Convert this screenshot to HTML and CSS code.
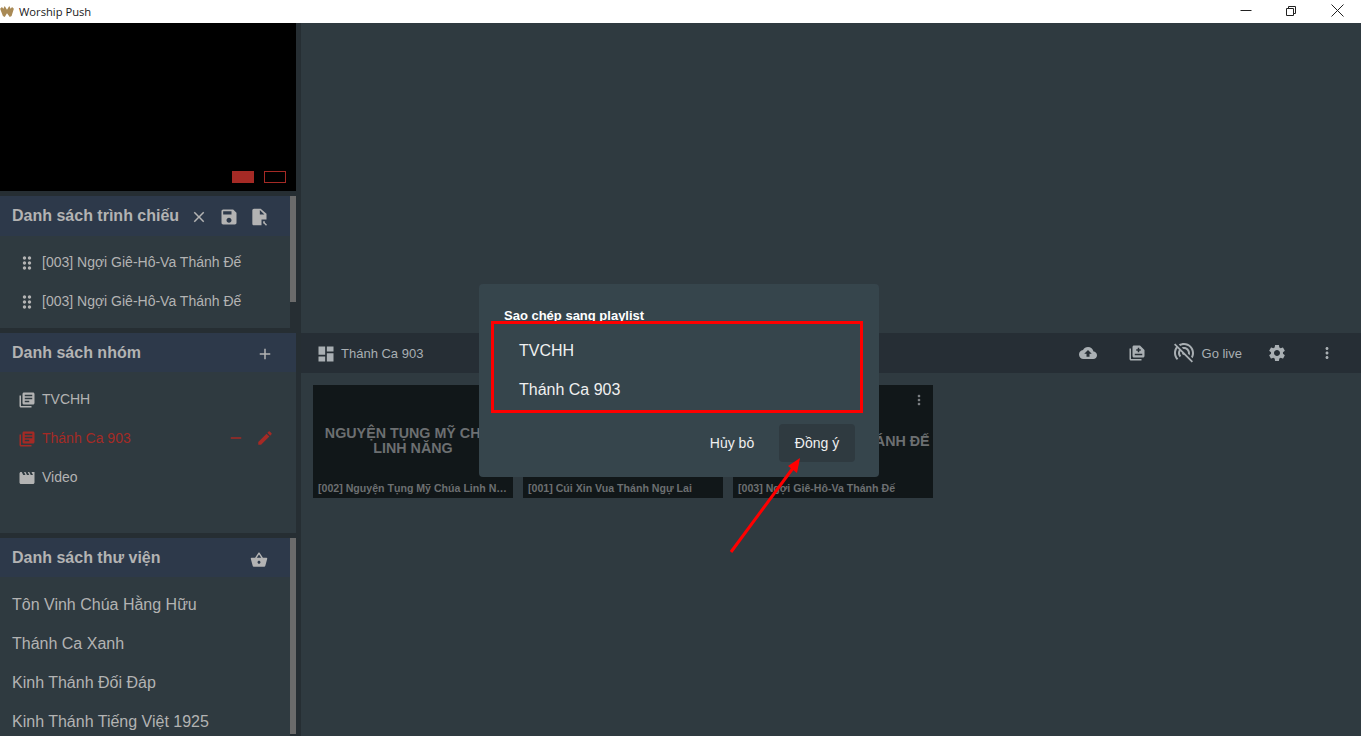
FILE: index.html
```html
<!DOCTYPE html>
<html lang="en">
<head>
    <meta charset="UTF-8">
    <meta name="viewport" content="width=device-width, initial-scale=1.0">
    <title>Worship Push</title>
    <link rel="stylesheet" href="styles.css">
</head>
<body>
    <svg class="sprite" aria-hidden="true">
        <symbol id="i-close" viewBox="0 0 24 24"><path d="M19 6.41L17.59 5 12 10.59 6.41 5 5 6.41 10.59 12 5 17.59 6.41 19 12 13.41 17.59 19 19 17.59 13.41 12z"/></symbol>
        <symbol id="i-save" viewBox="0 0 24 24"><path d="M17 3H5c-1.11 0-2 .9-2 2v14c0 1.1.89 2 2 2h14c1.1 0 2-.9 2-2V7l-4-4zm-5 16c-1.66 0-3-1.34-3-3s1.34-3 3-3 3 1.34 3 3-1.34 3-3 3zm3-10H5V5h10v4z"/></symbol>
        <symbol id="i-file" viewBox="0 0 24 24"><path d="M14 2H6c-1.1 0-2 .9-2 2v16c0 1.1.9 2 2 2h9v-7h6V8l-7-6zm-1 7V3.5L18.5 9H13z"/><path d="M17 17h2v1.6l2.6 2.6-1.2 1.2-2.6-2.6H17z"/></symbol>
        <symbol id="i-drag" viewBox="0 0 24 24"><path d="M11 18c0 1.1-.9 2-2 2s-2-.9-2-2 .9-2 2-2 2 .9 2 2zm-2-8c-1.1 0-2 .9-2 2s.9 2 2 2 2-.9 2-2-.9-2-2-2zm0-6c-1.1 0-2 .9-2 2s.9 2 2 2 2-.9 2-2-.9-2-2-2zm6 4c1.1 0 2-.9 2-2s-.9-2-2-2-2 .9-2 2 .9 2 2 2zm0 2c-1.1 0-2 .9-2 2s.9 2 2 2 2-.9 2-2-.9-2-2-2zm0 6c-1.1 0-2 .9-2 2s.9 2 2 2 2-.9 2-2-.9-2-2-2z"/></symbol>
        <symbol id="i-add" viewBox="0 0 24 24"><path d="M19 13h-6v6h-2v-6H5v-2h6V5h2v6h6v2z"/></symbol>
        <symbol id="i-books" viewBox="0 0 24 24"><path d="M4 6H2v14c0 1.1.9 2 2 2h14v-2H4V6zm16-4H8c-1.1 0-2 .9-2 2v12c0 1.1.9 2 2 2h12c1.1 0 2-.9 2-2V4c0-1.1-.9-2-2-2zm-1 9H9V9h10v2zm-4 4H9v-2h6v2zm4-8H9V5h10v2z"/></symbol>
        <symbol id="i-movie" viewBox="0 0 24 24"><path d="M18 4l2 4h-3l-2-4h-2l2 4h-3l-2-4H8l2 4H7L5 4H4c-1.1 0-1.99.9-1.99 2L2 18c0 1.1.9 2 2 2h16c1.1 0 2-.9 2-2V4h-4z"/></symbol>
        <symbol id="i-remove" viewBox="0 0 24 24"><path d="M19 13H5v-2h14v2z"/></symbol>
        <symbol id="i-edit" viewBox="0 0 24 24"><path d="M3 17.25V21h3.75L17.81 9.94l-3.75-3.75L3 17.25zM20.71 7.04c.39-.39.39-1.02 0-1.41l-2.34-2.34c-.39-.39-1.02-.39-1.41 0l-1.83 1.83 3.75 3.75 1.83-1.83z"/></symbol>
        <symbol id="i-basket" viewBox="0 0 24 24"><path d="M17.21 9l-4.38-6.56c-.19-.28-.51-.42-.83-.42-.32 0-.64.14-.83.43L6.79 9H2c-.55 0-1 .45-1 1 0 .09.01.18.04.27l2.54 9.27c.23.84 1 1.46 1.92 1.46h13c.92 0 1.69-.62 1.93-1.46l2.54-9.27L23 10c0-.55-.45-1-1-1h-4.79zM9 9l3-4.4L15 9H9zm3 8c-1.1 0-2-.9-2-2s.9-2 2-2 2 .9 2 2-.9 2-2 2z"/></symbol>
        <symbol id="i-dashboard" viewBox="0 0 24 24"><path d="M3 13h8V3H3v10zm0 8h8v-6H3v6zm10 0h8V11h-8v10zm0-18v6h8V3h-8z"/></symbol>
        <symbol id="i-cloud" viewBox="0 0 24 24"><path d="M19.35 10.04C18.67 6.59 15.64 4 12 4 9.11 4 6.6 5.64 5.35 8.04 2.34 8.36 0 10.91 0 14c0 3.31 2.69 6 6 6h13c2.76 0 5-2.24 5-5 0-2.64-2.05-4.78-4.65-4.96zM14 13v4h-4v-4H7l5-5 5 5h-3z"/></symbol>
        <symbol id="i-playlist" viewBox="0 0 24 24"><path d="M4 6H2v14c0 1.1.9 2 2 2h14v-2H4V6zm12-4H8c-1.1 0-2 .9-2 2v12c0 1.1.9 2 2 2h12c1.1 0 2-.9 2-2V8l-6-6zm3 13H9v-2h10v2zm-4-4h-2V9h-2V7h2V5h2v2h2v2h-2v2z"/></symbol>
        <symbol id="i-wifi-off" viewBox="0 0 24 24"><path d="M17.56 14.24c.28-.69.44-1.45.44-2.24 0-3.31-2.69-6-6-6-.79 0-1.55.16-2.24.44l1.62 1.62c.2-.03.41-.06.62-.06 2.21 0 4 1.79 4 4 0 .21-.02.42-.05.63l1.61 1.61zM12 4c4.42 0 8 3.58 8 8 0 1.35-.35 2.62-.95 3.74l1.47 1.47C21.46 15.69 22 13.91 22 12c0-5.52-4.48-10-10-10-1.91 0-3.69.55-5.21 1.47l1.46 1.46C9.37 4.34 10.65 4 12 4zM3.27 2.5L2 3.77l2.1 2.1C2.79 7.57 2 9.69 2 12c0 2.73 1.1 5.2 2.88 7.01l1.41-1.41C4.88 16.21 4 14.21 4 12c0-1.77.57-3.4 1.53-4.73l1.43 1.44C6.36 9.68 6 10.8 6 12c0 1.66.67 3.15 1.76 4.24l1.42-1.42C8.45 14.1 8 13.1 8 12c0-.65.17-1.25.44-1.79l1.58 1.58L10 12c0 1.1.9 2 2 2l.21-.02 7.52 7.52L21 20.23 4.27 3.5z"/></symbol>
        <symbol id="i-gear" viewBox="0 0 24 24"><path d="M19.14 12.94c.04-.3.06-.61.06-.94 0-.32-.02-.64-.07-.94l2.03-1.58c.18-.14.23-.41.12-.61l-1.92-3.32c-.12-.22-.37-.29-.59-.22l-2.39.96c-.5-.38-1.03-.7-1.62-.94l-.36-2.54c-.04-.24-.24-.41-.48-.41h-3.84c-.24 0-.43.17-.47.41l-.36 2.54c-.59.24-1.13.57-1.62.94l-2.39-.96c-.22-.08-.47 0-.59.22L2.74 8.87c-.12.21-.08.47.12.61l2.03 1.58c-.05.3-.09.63-.09.94s.02.64.07.94l-2.03 1.58c-.18.14-.23.41-.12.61l1.92 3.32c.12.22.37.29.59.22l2.39-.96c.5.38 1.03.7 1.62.94l.36 2.54c.05.24.24.41.48.41h3.84c.24 0 .44-.17.47-.41l.36-2.54c.59-.24 1.13-.56 1.62-.94l2.39.96c.22.08.47 0 .59-.22l1.92-3.32c.12-.22.07-.47-.12-.61l-2.01-1.58zM12 15.6c-1.98 0-3.6-1.62-3.6-3.6s1.62-3.6 3.6-3.6 3.6 1.62 3.6 3.6-1.62 3.6-3.6 3.6z"/></symbol>
        <symbol id="i-more" viewBox="0 0 24 24"><path d="M12 8c1.1 0 2-.9 2-2s-.9-2-2-2-2 .9-2 2 .9 2 2 2zm0 2c-1.1 0-2 .9-2 2s.9 2 2 2 2-.9 2-2-.9-2-2-2zm0 6c-1.1 0-2 .9-2 2s.9 2 2 2 2-.9 2-2-.9-2-2-2z"/></symbol>
    </svg>

    <!-- Window title bar -->
    <header class="titlebar">
        <svg class="app-logo" viewBox="0 0 15 12"><path d="M0 3l2-2 1.5 2L5 0l2.5 4L10 0l1.500 3L13 1l2 2-2.500 8-2 1L7.500 8 5 12l-2-1z"/></svg>
        <span class="app-name">Worship Push</span>
        <div class="win-controls">
            <svg class="win-btn" viewBox="0 0 46 23"><path d="M18.500 10.500h11"/></svg>
            <svg class="win-btn" viewBox="0 0 46 23"><path d="M18.500 8.500h7v7h-7zM20.500 8.500v-2h7v7h-2"/></svg>
            <svg class="win-btn" viewBox="0 0 46 23"><path d="M17.500 4.500l12 12M29.500 4.500l-12 12"/></svg>
        </div>
    </header>

    <div class="app">
        <aside class="sidebar">
            <div class="preview">
                <span class="screen-btn screen-btn-on"></span>
                <span class="screen-btn"></span>
            </div>

            <section class="panel panel-slides">
                <div class="panel-main">
                    <div class="panel-head">
                        <h2>Danh sách trình chiếu</h2>
                        <svg class="icon icon-close"><use href="#i-close"/></svg>
                        <svg class="icon icon-save"><use href="#i-save"/></svg>
                        <svg class="icon icon-file"><use href="#i-file"/></svg>
                    </div>
                    <ul class="list">
                        <li class="slide-row"><svg class="icon-drag"><use href="#i-drag"/></svg>[003] Ngợi Giê-Hô-Va Thánh Đế</li>
                        <li class="slide-row"><svg class="icon-drag"><use href="#i-drag"/></svg>[003] Ngợi Giê-Hô-Va Thánh Đế</li>
                    </ul>
                </div>
                <div class="scroll-track"><div class="scroll-thumb thumb-slides"></div></div>
            </section>

            <section class="panel panel-groups">
                <div class="panel-main">
                    <div class="panel-head">
                        <h2>Danh sách nhóm</h2>
                        <svg class="icon icon-add"><use href="#i-add"/></svg>
                    </div>
                    <ul class="list">
                        <li class="group-row"><svg class="icon"><use href="#i-books"/></svg>TVCHH</li>
                        <li class="group-row group-active">
                            <svg class="icon"><use href="#i-books"/></svg>Thánh Ca 903
                            <svg class="icon icon-remove"><use href="#i-remove"/></svg>
                            <svg class="icon icon-edit"><use href="#i-edit"/></svg>
                        </li>
                        <li class="group-row"><svg class="icon"><use href="#i-movie"/></svg>Video</li>
                    </ul>
                </div>
            </section>

            <section class="panel panel-library">
                <div class="panel-main">
                    <div class="panel-head">
                        <h2>Danh sách thư viện</h2>
                        <svg class="icon icon-basket"><use href="#i-basket"/></svg>
                    </div>
                    <ul class="list">
                        <li class="library-row">Tôn Vinh Chúa Hằng Hữu</li>
                        <li class="library-row">Thánh Ca Xanh</li>
                        <li class="library-row">Kinh Thánh Đối Đáp</li>
                        <li class="library-row">Kinh Thánh Tiếng Việt 1925</li>
                    </ul>
                </div>
                <div class="scroll-track"><div class="scroll-thumb thumb-library"></div></div>
            </section>
        </aside>

        <main class="content">
            <div class="stage"></div>
            <div class="toolbar">
                <svg class="icon tool-dashboard"><use href="#i-dashboard"/></svg>
                <span class="toolbar-title">Thánh Ca 903</span>
                <svg class="icon tool-cloud"><use href="#i-cloud"/></svg>
                <svg class="icon tool-playlist"><use href="#i-playlist"/></svg>
                <svg class="icon tool-wifi"><use href="#i-wifi-off"/></svg>
                <span class="go-live">Go live</span>
                <svg class="icon tool-gear"><use href="#i-gear"/></svg>
                <svg class="icon tool-more"><use href="#i-more"/></svg>
            </div>
            <div class="cards">
                <article class="card">
                    <div class="card-title">Nguyện Tụng Mỹ Chúa Linh Năng</div>
                    <div class="card-caption">[002] Nguyện Tụng Mỹ Chúa Linh Năng</div>
                </article>
                <article class="card">
                    <div class="card-title">Cúi Xin Vua Thánh Ngự Lai</div>
                    <div class="card-caption">[001] Cúi Xin Vua Thánh Ngự Lai</div>
                </article>
                <article class="card">
                    <svg class="card-more"><use href="#i-more"/></svg>
                    <div class="card-title">Ngợi Giê-Hô-Va Thánh Đế</div>
                    <div class="card-caption">[003] Ngợi Giê-Hô-Va Thánh Đế</div>
                </article>
            </div>
        </main>
    </div>

    <!-- Copy dialog -->
    <div class="dialog">
        <div class="dialog-title">Sao chép sang playlist</div>
        <ul class="dialog-list">
            <li>TVCHH</li>
            <li>Thánh Ca 903</li>
        </ul>
        <div class="dialog-actions">
            <button class="btn">Hủy bỏ</button>
            <button class="btn btn-ok">Đồng ý</button>
        </div>
    </div>

    <!-- Red arrow drawn on top of the screenshot -->
    <svg class="arrow" viewBox="0 0 80 100">
        <path class="arrow-line" d="M2 95L64 11"/>
        <path class="arrow-head" d="M71 1L68 16 59 9z"/>
    </svg>
</body>
</html>
```

FILE: styles.css
```css
* {
    box-sizing: border-box;
}

html, body {
    height: 100%;
}

body {
    margin: 0;
    height: 736px;
    overflow: hidden;
    display: flex;
    flex-direction: column;
    font-family: "Liberation Sans", Arial, sans-serif;
    background: #2f3a40;
    color: #b3b3b3;
}

.sprite {
    display: none;
}

ul {
    list-style: none;
    margin: 0;
    padding: 0;
}

.icon {
    width: 18px;
    height: 18px;
    fill: currentColor;
    flex: none;
}

/* title bar */
.titlebar {
    height: 23px;
    flex: none;
    display: flex;
    align-items: center;
    background: #fff;
    color: #1a1a1a;
}

.app-logo {
    width: 14px;
    height: 11px;
    margin-top: -1px;
    fill: #a98a55;
}

.app-name {
    margin-left: 5px;
    font-family: "Open Sans", sans-serif;
    font-size: 11.200px;
}

.win-controls {
    margin-left: auto;
    margin-right: 1px;
    display: flex;
}

.win-btn {
    width: 46px;
    height: 23px;
    fill: none;
    stroke: #222;
    stroke-width: 1;
}

/* layout */
.app {
    flex: 1;
    display: flex;
    min-height: 0;
    background: #262e33;
    gap: 5px;
}

.sidebar {
    width: 296px;
    flex: none;
    display: flex;
    flex-direction: column;
    gap: 5px;
}

.preview {
    height: 168px;
    flex: none;
    background: #000;
    display: flex;
    justify-content: flex-end;
    align-items: flex-end;
    gap: 10px;
    padding: 0 10px 8px 0;
}

.screen-btn {
    width: 22px;
    height: 12px;
    border: 1px solid #a52a25;
}

.screen-btn-on {
    background: #a52a25;
}

.panel {
    display: flex;
    background: #2f3a40;
    overflow: hidden;
}

.panel-slides {
    height: 132px;
    flex: none;
}

.panel-groups {
    height: 200px;
    flex: none;
}

.panel-library {
    flex: 1;
    min-height: 0;
}

.panel-main {
    flex: 1;
    min-width: 0;
}

.panel-head {
    height: 39px;
    display: flex;
    align-items: center;
    padding-left: 12px;
    background: #2d394a;
}

.panel-slides .panel-head {
    height: 40px;
}

.panel-head h2 {
    margin: 1px 0 0;
    font-size: 16px;
    font-weight: bold;
    color: #b3b3b3;
}

.panel-slides .panel-head h2 {
    margin-top: -1px;
}

.icon-close {
    margin-left: 11px;
    margin-top: 2px;
}

.icon-save,
.icon-file {
    width: 20px;
    height: 20px;
    margin-left: 11px;
    margin-top: 1px;
}

.icon-file {
    margin-left: 10px;
}

.icon-add {
    margin-left: auto;
    margin-right: 22px;
    margin-top: 2px;
}

.icon-basket {
    margin-left: auto;
    margin-right: 22px;
    margin-top: 4px;
}

.list {
    padding-top: 7px;
}

.panel-slides .list {
    padding-top: 6px;
}

.panel-library .list {
    padding-top: 8px;
}

.slide-row,
.group-row,
.library-row {
    height: 39px;
    display: flex;
    align-items: center;
}

.slide-row {
    padding-left: 17px;
    font-size: 14px;
}

.icon-drag {
    width: 20px;
    height: 20px;
    fill: currentColor;
    margin-right: 5px;
    margin-top: 2px;
}

.group-row {
    padding-left: 18px;
    font-size: 14px;
}

.group-row .icon {
    width: 18px;
    height: 18px;
    margin-right: 6px;
    margin-top: 2px;
}

.group-active {
    color: #a52a25;
}

.group-row .icon-remove {
    margin-left: auto;
    margin-right: 11px;
    margin-top: 1px;
}

.group-row .icon-edit {
    margin-right: 22px;
    margin-top: 1px;
}

.library-row {
    padding-left: 12px;
    font-size: 16px;
}

.scroll-track {
    width: 6px;
    flex: none;
    background: #262e33;
}

.scroll-thumb {
    background: #6b6b6b;
}

.thumb-slides {
    height: 106px;
}

.thumb-library {
    height: 196px;
}

/* main side */
.content {
    flex: 1;
    min-width: 0;
    display: flex;
    flex-direction: column;
    background: #2f3a40;
}

.stage {
    height: 310px;
    flex: none;
}

.toolbar {
    height: 40px;
    flex: none;
    display: flex;
    align-items: center;
    padding-left: 15px;
    background: #262e35;
    color: #a9afb3;
}

.tool-dashboard {
    width: 20px;
    height: 20px;
    margin-top: 1px;
}

.toolbar-title {
    margin-left: 5px;
    font-size: 13px;
}

.tool-cloud {
    margin-left: auto;
}

.tool-playlist {
    margin-left: 31px;
}

.tool-wifi {
    margin-left: 26px;
    width: 24px;
    height: 24px;
}

.go-live {
    margin-left: 6px;
    font-size: 13px;
}

.tool-gear {
    margin-left: 25px;
    width: 20px;
    height: 20px;
}

.tool-more {
    margin-left: 31px;
    margin-right: 25px;
}

.cards {
    display: flex;
    gap: 10px;
    padding: 12px;
}

.card {
    position: relative;
    width: 200px;
    height: 113px;
    display: flex;
    flex-direction: column;
    background: #111719;
    color: #6c6f71;
}

.card-title {
    flex: 1;
    display: flex;
    align-items: center;
    justify-content: center;
    text-align: center;
    padding: 22px 3px 0;
    font-size: 14.300px;
    line-height: 15px;
    font-weight: bold;
    text-transform: uppercase;
}

.card-caption {
    height: 23px;
    line-height: 23px;
    padding: 2px 5px 0;
    font-size: 10.600px;
    font-weight: bold;
    white-space: nowrap;
    overflow: hidden;
    text-overflow: ellipsis;
}

.card-more {
    position: absolute;
    top: 6px;
    right: 6px;
    width: 16px;
    height: 18px;
    fill: #7d8184;
}

/* dialog */
.dialog {
    position: absolute;
    left: 479px;
    top: 284px;
    width: 400px;
    height: 193px;
    padding: 24px 16px 0 12px;
    background: #36454c;
    border-radius: 4px;
    color: #fff;
}

.dialog-title {
    height: 13px;
    padding-left: 13px;
    font-size: 13px;
    line-height: 15px;
    font-weight: bold;
}

.dialog-list {
    position: relative;
    height: 92px;
    padding: 7px 0 0 25px;
    border: 3px solid #f00;
    background: #36454c;
}

.dialog-list li {
    height: 39px;
    display: flex;
    align-items: center;
    font-size: 16px;
    color: #f0f0f0;
}

.dialog-actions {
    display: flex;
    justify-content: flex-end;
    align-items: center;
    gap: 9px;
    margin-top: 11px;
    padding-right: 8px;
}

.btn {
    width: 76px;
    height: 38px;
    border: 0;
    border-radius: 4px;
    background: none;
    color: #f0f0f0;
    font-family: inherit;
    font-size: 14px;
}

.btn-ok {
    background: #2f3a40;
}

.arrow {
    position: absolute;
    left: 729px;
    top: 457px;
    width: 80px;
    height: 100px;
}

.arrow-line {
    fill: none;
    stroke: #f00;
    stroke-width: 3;
}

.arrow-head {
    fill: #f00;
}
```
